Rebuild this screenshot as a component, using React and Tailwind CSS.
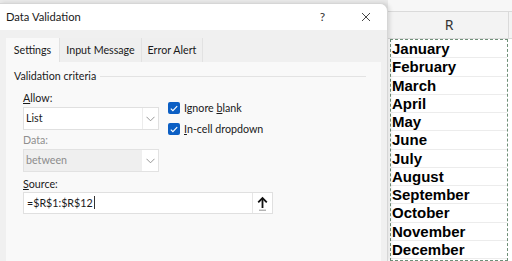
const months = ['January', 'February', 'March', 'April', 'May', 'June', 'July', 'August', 'September', 'October', 'November', 'December']

const ui = { fontFamily: "Lato, 'Noto Sans', sans-serif" }

function Chevron() {
  return (
    <svg width="9" height="6" viewBox="0 0 9 6" fill="none">
      <path d="M0.5 0.8 L4.5 4.8 L8.5 0.8" stroke="#8a8a8a" strokeWidth="0.9" />
    </svg>
  )
}

function Check({ label, u, rest }) {
  return (
    <div className="flex items-center h-[12px]">
      <div className="w-[12px] h-[12px] rounded-[2px] bg-[#0c5fc4] flex items-center justify-center">
        <svg width="8" height="7" viewBox="0 0 8 7" fill="none">
          <path d="M0.8 3.6 L2.9 5.6 L7.2 1.2" stroke="#fff" strokeWidth="1.2" />
        </svg>
      </div>
      <span className="ml-[4px] text-[10.7px] text-[#1a1a1a] leading-none">
        {label}<span className="underline">{u}</span>{rest}
      </span>
    </div>
  )
}

export default function App() {
  return (
    <div className="w-[512px] h-[261px] overflow-hidden relative flex bg-white" style={ui}>
      {/* Dialog */}
      <div className="w-[388px] flex flex-col bg-[#e9e9e9] relative z-10">
        <div className="h-[3px] bg-[#eaeaea]" />
        <div className="flex-1 flex flex-col bg-[#f0f0f0] rounded-tr-[8px] shadow-[2px_0_4px_rgba(0,0,0,0.12)] border-r border-t border-[#d6d6d6] overflow-hidden">
          {/* Title bar */}
          <div className="h-[26px] bg-white flex items-center pl-[6px] text-[11.2px] text-[#1a1a1a]">
            <span>Data Validation</span>
            <span className="ml-auto text-[12px] text-[#333] mr-[36px]">?</span>
            <svg width="10" height="10" viewBox="0 0 10 10" className="mr-[16px]">
              <path d="M1 1 L9 9 M9 1 L1 9" stroke="#333" strokeWidth="0.9" />
            </svg>
          </div>

          <div className="flex-1 flex flex-col px-[6px] pt-[8px]">
            {/* Tabs */}
            <div className="flex h-[24px] text-[10.7px] text-[#1a1a1a]">
              <div className="w-[53px] bg-[#f9f9f9] flex items-center justify-center">Settings</div>
              <div className="w-[82px] bg-[#efefef] border-l border-[#e2e2e2] flex items-center justify-center">Input Message</div>
              <div className="w-[62px] bg-[#efefef] border-l border-r border-[#e2e2e2] flex items-center justify-center">Error Alert</div>
            </div>

            {/* Panel */}
            <div className="flex-1 bg-[#f9f9f9] px-[8px] pt-[6px]">
              <div className="flex items-center h-[16px] text-[10.7px] text-[#1a1a1a]">
                <span>Validation criteria</span>
                <div className="flex-1 border-t border-[#e3e3e3] ml-[4px] mr-[7px]" />
              </div>

              <div className="pl-[9px]">
                <div className="flex">
                  <div className="w-[136px]">
                    <div className="mt-[7px] h-[14px] flex items-center text-[10.7px] text-[#1a1a1a]">
                      <span><span className="underline">A</span>llow:</span>
                    </div>
                    <div className="mt-[2px] h-[23px] bg-white border border-[#e0e0e0] flex items-center">
                      <span className="pl-[2px] flex-1 text-[10.7px] text-[#1a1a1a]">List</span>
                      <div className="w-[16px] h-full border-l border-[#ececec] flex items-center justify-center">
                        <Chevron />
                      </div>
                    </div>
                    <div className="mt-[3px] h-[14px] flex items-center text-[10.7px] text-[#8f8f8f]">Data:</div>
                    <div className="mt-[2px] h-[23px] bg-[#efefef] border border-[#e2e2e2] flex items-center">
                      <span className="pl-[2px] flex-1 text-[10.7px] text-[#8c8c8c]">between</span>
                      <div className="w-[16px] h-full bg-white flex items-center justify-center">
                        <Chevron />
                      </div>
                    </div>
                  </div>
                  <div className="ml-[9px] pt-[18px] flex flex-col gap-[9px]">
                    <Check label="Ignore " u="b" rest="lank" />
                    <Check label="" u="I" rest="n-cell dropdown" />
                  </div>
                </div>

                <div className="mt-[5px] h-[14px] flex items-center text-[10.7px] text-[#1a1a1a]">
                  <span><span className="underline">S</span>ource:</span>
                </div>
                <div className="mt-[1px] w-[250px] h-[22px] bg-white border border-[#e0e0e0] flex items-center">
                  <span className="pl-[3px] flex-1 text-[10.7px] text-[#1a1a1a] flex items-center">
                    =$R$1:$R$12<span className="inline-block w-px h-[13px] bg-[#333] ml-px" />
                  </span>
                  <div className="w-[20px] h-full border-l border-[#e6e6e6] flex items-center justify-center">
                    <svg width="11" height="15" viewBox="0 0 11 15" fill="none">
                      <path d="M5.5 2 V12" stroke="#111" strokeWidth="1.8" />
                      <path d="M1.2 6.3 L5.5 2 L9.8 6.3" stroke="#111" strokeWidth="1.8" />
                      <path d="M2 14.2 H9" stroke="#777" strokeWidth="0.8" />
                    </svg>
                  </div>
                </div>
              </div>
            </div>
          </div>
        </div>
      </div>

      {/* Spreadsheet */}
      <div className="flex-1 flex flex-col bg-white">
        <div className="h-[11px] bg-[#f7f7f7]" />
        <div className="h-[28px] bg-[#f3f3f3] border-t border-b border-[#dadada] flex">
          <div className="w-[118px] ml-[2px] flex items-end justify-center pb-[3px] text-[14px] text-[#333]" style={{ fontFamily: "'Noto Sans', sans-serif" }}>R</div>
          <div className="flex-1 border-l border-[#dadada]" />
        </div>
        <div className="flex flex-1">
          <div className="w-[118px] ml-[2px] border border-dashed border-[#6f8f78] flex flex-col">
            {months.map((m) => (
              <div key={m} className="h-[18.25px] flex items-center border-b border-[#ececec] pl-[1px] text-[15px] font-bold text-black leading-none" style={{ fontFamily: "'Liberation Sans', Arial, sans-serif" }}>
                {m}
              </div>
            ))}
          </div>
          <div className="flex-1" />
        </div>
      </div>
    </div>
  )
}
